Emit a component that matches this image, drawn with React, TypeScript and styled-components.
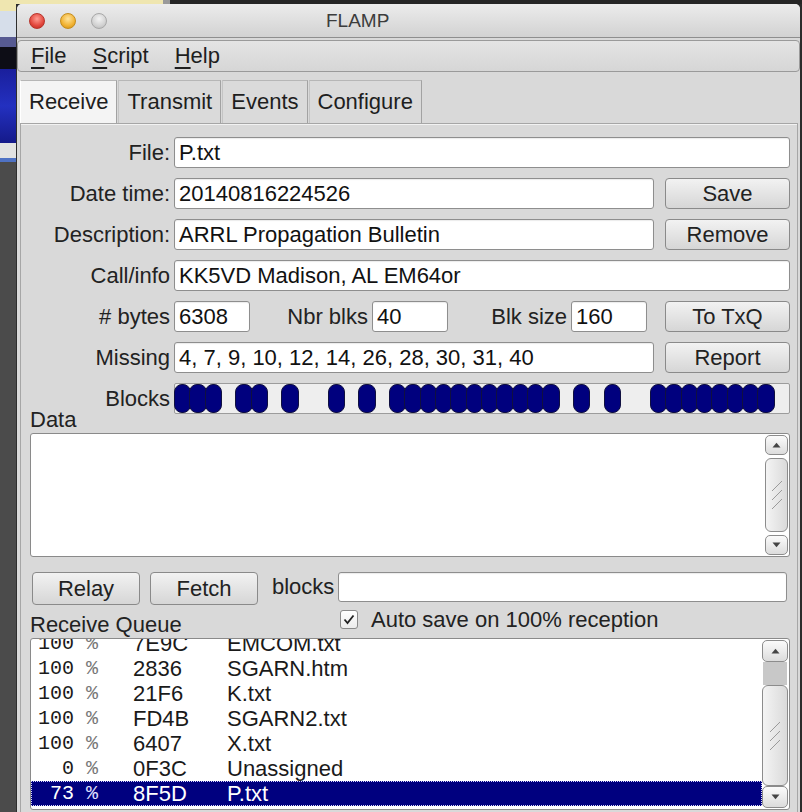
import styled, { createGlobalStyle } from 'styled-components';

const GlobalStyle = createGlobalStyle`
  html, body {
    margin: 0;
    padding: 0;
    background: #2b2b2b;
  }
  body {
    font-family: "Liberation Sans", Arial, sans-serif;
    color: #1e1e1e;
  }
`;

type QueueItem = { pct: number; id: string; name: string; selected?: boolean };

const missing = [4, 7, 9, 10, 12, 14, 26, 28, 30, 31, 40];
const blocks = Array.from({ length: 40 }, (_, i) => !missing.includes(i + 1));

const queue: QueueItem[] = [
  { pct: 100, id: '7E9C', name: 'EMCOM.txt' },
  { pct: 100, id: '2836', name: 'SGARN.htm' },
  { pct: 100, id: '21F6', name: 'K.txt' },
  { pct: 100, id: 'FD4B', name: 'SGARN2.txt' },
  { pct: 100, id: '6407', name: 'X.txt' },
  { pct: 0, id: '0F3C', name: 'Unassigned' },
  { pct: 73, id: '8F5D', name: 'P.txt', selected: true },
];

// bits of other windows peeking out on the left of the desktop
const backdrop = [
  { h: 7, bg: '#efe6b0' },
  { h: 26, bg: '#d6deea' },
  { h: 10, bg: '#565a92' },
  { h: 22, bg: '#0d0d16' },
  { h: 74, bg: 'linear-gradient(#1a1f9c, #2330c0 50%, #151a8a)' },
  { h: 15, bg: '#e2e2e2' },
  { h: 4, bg: '#4f72c4' },
  { h: 654, bg: '#4b4b4b' },
];

const Desktop = styled.div`
  display: grid;
  grid-template-columns: 17px 783px 2px;
  grid-template-rows: 4px 808px;
  width: 802px;
  height: 812px;
  overflow: hidden;
  background: #2b2b2b;
`;

const TopStrip = styled.div`
  grid-column: 1 / -1;
  background: linear-gradient(to right, #efe6b0 0 163px, #9a9a9a 163px 170px, #262626 170px);
`;

const SideStrip = styled.div`
  display: flex;
  flex-direction: column;
  border-right: 1px solid #2e2e2e;
`;

const Backdrop = styled.div<{ $h: number; $bg: string }>`
  height: ${(p) => p.$h}px;
  flex-shrink: 0;
  background: ${(p) => p.$bg};
`;

const Window = styled.div`
  display: flex;
  flex-direction: column;
  background: #d9d9d9;
  border-radius: 5px 5px 0 0;
  overflow: hidden;
`;

const TitleBar = styled.div`
  height: 33px;
  display: flex;
  align-items: center;
  gap: 15px;
  padding-left: 12px;
  background: linear-gradient(#ececec, #d2d2d2);
  border-bottom: 1px solid #8e8e8e;
`;

const Light = styled.span<{ $color: 'red' | 'yellow' | 'gray' }>`
  width: 16px;
  height: 16px;
  border-radius: 50%;
  box-sizing: border-box;
  background: ${(p) =>
    p.$color === 'red'
      ? 'radial-gradient(circle at 50% 35%, #ff9b90, #e2463c 60%, #b2291f)'
      : p.$color === 'yellow'
        ? 'radial-gradient(circle at 50% 35%, #ffe39a, #f1b232 60%, #c98a12)'
        : 'radial-gradient(circle at 50% 35%, #f4f4f4, #d2d2d2 60%, #b4b4b4)'};
  border: 1px solid ${(p) => (p.$color === 'red' ? '#b8342b' : p.$color === 'yellow' ? '#c58d1c' : '#a8a8a8')};
`;

const Title = styled.span`
  margin-left: 204px;
  font-size: 19px;
  color: #3c3c3c;
`;

const MenuBar = styled.div`
  margin-top: 2px;
  height: 30px;
  display: flex;
  gap: 26px;
  padding-left: 13px;
  border: 1px solid #9a9a9a;
  border-radius: 4px;
  background: linear-gradient(#e4e4e4, #d6d6d6);
  font-size: 22px;
  line-height: 30px;
`;

const Accel = styled.span`
  text-decoration: underline;
  text-underline-offset: 4px;
  text-decoration-thickness: 2px;
`;

const TabRow = styled.div`
  margin-top: 8px;
  height: 43px;
  display: flex;
  gap: 1px;
  padding-left: 3px;
`;

const Tab = styled.div<{ $active?: boolean }>`
  padding: 0 8px;
  border-left: 1px solid ${(p) => (p.$active ? '#ffffff' : '#c4c4c4')};
  border-right: 1px solid #a2a2a2;
  border-top: 1px solid #b6b6b6;
  background: ${(p) => (p.$active ? '#f4f4f4' : '#dadada')};
  font-size: 22px;
  line-height: 42px;
`;

const Panel = styled.div`
  flex: 1;
  margin: 0 2px 0 3px;
  padding: 13px 7px 0 0;
  border: 1px solid #a6a6a6;
  border-bottom: none;
  box-shadow: inset 0 1px 0 #f2f2f2;
  background: #d9d9d9;
  display: flex;
  flex-direction: column;
`;

const Form = styled.div`
  display: flex;
  flex-direction: column;
  gap: 10px;
`;

const Row = styled.div`
  display: flex;
  align-items: center;
  height: 31px;
`;

const Label = styled.span<{ $w: number }>`
  width: ${(p) => p.$w}px;
  flex-shrink: 0;
  margin-right: 4px;
  text-align: right;
  font-size: 22px;
  white-space: nowrap;
  color: #222;
`;

const Field = styled.div<{ $w?: number }>`
  ${(p) => (p.$w ? `width: ${p.$w}px; flex-shrink: 0;` : 'flex: 1;')}
  height: 31px;
  box-sizing: border-box;
  padding: 0 4px;
  border: 1px solid #8e8e8e;
  border-radius: 3px;
  background: #fff;
  box-shadow: inset 0 1px 1px rgba(0, 0, 0, 0.08);
  font-size: 22px;
  line-height: 29px;
  white-space: nowrap;
  overflow: hidden;
  color: #111;
`;

const Button = styled.div<{ $w?: number }>`
  width: ${(p) => p.$w ?? 125}px;
  flex-shrink: 0;
  height: 31px;
  box-sizing: border-box;
  border: 1px solid #8a8a8a;
  border-radius: 4px;
  background: linear-gradient(#f2f2f2, #d6d6d6);
  font-size: 22px;
  line-height: 29px;
  text-align: center;
  color: #222;
`;

const SideButton = styled(Button)`
  margin-left: 11px;
`;

const Spacer = styled.div`
  flex: 1;
`;

const BlockBar = styled.div`
  flex: 1;
  height: 31px;
  box-sizing: border-box;
  display: grid;
  grid-template-columns: repeat(40, 1fr);
  border: 1px solid #9c9c9c;
  border-radius: 2px;
  background: #eeeeee;
`;

const Block = styled.div<{ $on: boolean }>`
  margin: 0 -1px;
  border-radius: 8px;
  background: ${(p) => (p.$on ? '#00007e' : 'transparent')};
  border: 1px solid ${(p) => (p.$on ? '#101040' : 'transparent')};
`;

const SectionLabel = styled.div`
  padding-left: 9px;
  font-size: 22px;
  line-height: 18px;
  height: 18px;
  margin: -3px 0 4px;
  color: #222;
`;

const TextBox = styled.div<{ $h: number }>`
  margin-left: 9px;
  height: ${(p) => p.$h}px;
  box-sizing: border-box;
  display: flex;
  border: 1px solid #8a8a8a;
  border-radius: 3px;
  background: #fff;
  overflow: hidden;
`;

const TextBody = styled.div`
  flex: 1;
  overflow: hidden;
`;

const ScrollBar = styled.div<{ $w: number; $gap: number }>`
  width: ${(p) => p.$w}px;
  flex-shrink: 0;
  box-sizing: border-box;
  padding: 1px 1px 1px 0;
  display: flex;
  flex-direction: column;
  gap: ${(p) => p.$gap}px;
`;

const ScrollButton = styled.div<{ $h: number }>`
  height: ${(p) => p.$h}px;
  flex-shrink: 0;
  box-sizing: border-box;
  border: 1px solid #8c8c8c;
  border-radius: 5px;
  background: linear-gradient(#fbfbfb, #dcdcdc);
  display: flex;
  align-items: center;
  justify-content: center;
`;

const ScrollGutter = styled.div<{ $h: number }>`
  height: ${(p) => p.$h}px;
  flex-shrink: 0;
  margin: 0 1px;
  background: #c8c8c8;
`;

const ScrollThumb = styled.div`
  flex: 1;
  box-sizing: border-box;
  border: 1px solid #8c8c8c;
  border-radius: 6px;
  background: linear-gradient(to right, #f4f4f4, #dadada);
  display: flex;
  align-items: center;
  justify-content: center;
`;

const ActionRow = styled.div`
  margin-top: 15px;
  padding-left: 11px;
  display: flex;
  align-items: flex-start;
  gap: 10px;
  height: 33px;
`;

const ActionButton = styled(Button)`
  height: 33px;
  line-height: 31px;
`;

const InlineLabel = styled.span`
  margin-left: 4px;
  font-size: 22px;
  line-height: 30px;
  color: #222;
`;

const BlocksField = styled(Field)`
  margin-left: -6px;
  margin-right: 3px;
  height: 30px;
  line-height: 28px;
`;

const QueueHeader = styled.div`
  height: 33px;
  padding-left: 9px;
  display: grid;
  grid-template-columns: 310px 1fr;
`;

const QueueLabel = styled.span`
  align-self: end;
  margin-bottom: 2px;
  font-size: 22px;
  line-height: 22px;
  color: #222;
`;

const CheckItem = styled.label`
  margin-top: 5px;
  display: flex;
  align-items: center;
  gap: 13px;
  height: 19px;
  font-size: 22px;
  color: #222;
`;

const CheckBox = styled.span`
  width: 18px;
  height: 19px;
  box-sizing: border-box;
  border: 1px solid #8a8a8a;
  border-radius: 3px;
  background: linear-gradient(#ffffff, #ececec);
  display: flex;
  align-items: center;
  justify-content: center;
`;

const QueueList = styled.div`
  margin-top: -8px;
`;

const QueueRow = styled.div<{ $selected?: boolean }>`
  display: grid;
  grid-template-columns: 95px 94px 1fr;
  padding-left: 7px;
  height: 25px;
  box-sizing: border-box;
  line-height: 25px;
  font-size: 22px;
  white-space: nowrap;
  color: ${(p) => (p.$selected ? '#ffffff' : '#1a1a1a')};
  background: ${(p) => (p.$selected ? '#00007f' : 'transparent')};
  outline: ${(p) => (p.$selected ? '1px dotted #d8d8ff' : 'none')};
  outline-offset: -1px;
`;

const Pct = styled.span`
  font-family: "Liberation Mono", "Courier New", monospace;
  font-size: 20px;
  white-space: pre;
`;

const PctSign = styled.span<{ $selected?: boolean }>`
  color: ${(p) => (p.$selected ? '#e0e0ff' : '#777')};
`;

const UpArrow = () => (
  <svg width="9" height="6" viewBox="0 0 9 6">
    <path d="M0.5 5.5 L4.5 0.8 L8.5 5.5 Z" fill="#444" />
  </svg>
);

const DownArrow = () => (
  <svg width="9" height="6" viewBox="0 0 9 6">
    <path d="M0.5 0.5 L4.5 5.2 L8.5 0.5 Z" fill="#444" />
  </svg>
);

const Grip = () => (
  <svg width="12" height="30" viewBox="0 0 12 30">
    <path d="M1 11 L11 1 M1 20 L11 10 M1 29 L11 19" stroke="#9a9a9a" strokeWidth="1" fill="none" />
  </svg>
);

const Check = () => (
  <svg width="12" height="11" viewBox="0 0 12 11">
    <path d="M1.5 5.5 L4.5 9 L10.5 1.5" stroke="#222" strokeWidth="1.8" fill="none" />
  </svg>
);

const Scroller = ({ width, button, gap, gutter }: { width: number; button: number; gap: number; gutter?: number }) => (
  <ScrollBar $w={width} $gap={gap}>
    <ScrollButton $h={button}>
      <UpArrow />
    </ScrollButton>
    {gutter ? <ScrollGutter $h={gutter} /> : null}
    <ScrollThumb>
      <Grip />
    </ScrollThumb>
    <ScrollButton $h={button}>
      <DownArrow />
    </ScrollButton>
  </ScrollBar>
);

const MenuItem = ({ text }: { text: string }) => (
  <span>
    <Accel>{text[0]}</Accel>
    {text.slice(1)}
  </span>
);

export default function App() {
  return (
    <>
      <GlobalStyle />
      <Desktop>
        <TopStrip />
        <SideStrip>
          {backdrop.map((b, i) => (
            <Backdrop key={i} $h={b.h} $bg={b.bg} />
          ))}
        </SideStrip>
        <Window>
          <TitleBar>
            <Light $color="red" />
            <Light $color="yellow" />
            <Light $color="gray" />
            <Title>FLAMP</Title>
          </TitleBar>

          <MenuBar>
            <MenuItem text="File" />
            <MenuItem text="Script" />
            <MenuItem text="Help" />
          </MenuBar>

          <TabRow>
            <Tab $active>Receive</Tab>
            <Tab>Transmit</Tab>
            <Tab>Events</Tab>
            <Tab>Configure</Tab>
          </TabRow>

          <Panel>
            <Form>
              <Row>
                <Label $w={149}>File:</Label>
                <Field>P.txt</Field>
              </Row>
              <Row>
                <Label $w={149}>Date time:</Label>
                <Field>20140816224526</Field>
                <SideButton>Save</SideButton>
              </Row>
              <Row>
                <Label $w={149}>Description:</Label>
                <Field>ARRL Propagation Bulletin</Field>
                <SideButton>Remove</SideButton>
              </Row>
              <Row>
                <Label $w={149}>Call/info</Label>
                <Field>KK5VD Madison, AL EM64or</Field>
              </Row>
              <Row>
                <Label $w={149}># bytes</Label>
                <Field $w={76}>6308</Field>
                <Label $w={118}>Nbr blks</Label>
                <Field $w={76}>40</Field>
                <Label $w={119}>Blk size</Label>
                <Field $w={76}>160</Field>
                <Spacer />
                <Button>To TxQ</Button>
              </Row>
              <Row>
                <Label $w={149}>Missing</Label>
                <Field>{missing.join(', ')}</Field>
                <SideButton>Report</SideButton>
              </Row>
              <Row>
                <Label $w={149}>Blocks</Label>
                <BlockBar>
                  {blocks.map((on, i) => (
                    <Block key={i} $on={on} />
                  ))}
                </BlockBar>
              </Row>
            </Form>

            <SectionLabel>Data</SectionLabel>
            <TextBox $h={124}>
              <TextBody />
              <Scroller width={24} button={20} gap={3} />
            </TextBox>

            <ActionRow>
              <ActionButton $w={108}>Relay</ActionButton>
              <ActionButton $w={108}>Fetch</ActionButton>
              <InlineLabel>blocks</InlineLabel>
              <BlocksField />
            </ActionRow>

            <QueueHeader>
              <QueueLabel>Receive Queue</QueueLabel>
              <CheckItem>
                <CheckBox>
                  <Check />
                </CheckBox>
                Auto save on 100% reception
              </CheckItem>
            </QueueHeader>

            <TextBox $h={172}>
              <TextBody>
                <QueueList>
                  {queue.map((q) => (
                    <QueueRow key={q.id} $selected={q.selected}>
                      <Pct>
                        {String(q.pct).padStart(3, ' ')} <PctSign $selected={q.selected}>%</PctSign>
                      </Pct>
                      <span>{q.id}</span>
                      <span>{q.name}</span>
                    </QueueRow>
                  ))}
                </QueueList>
              </TextBody>
              <Scroller width={27} button={22} gap={0} gutter={23} />
            </TextBox>
          </Panel>
        </Window>
        <div />
      </Desktop>
    </>
  );
}
